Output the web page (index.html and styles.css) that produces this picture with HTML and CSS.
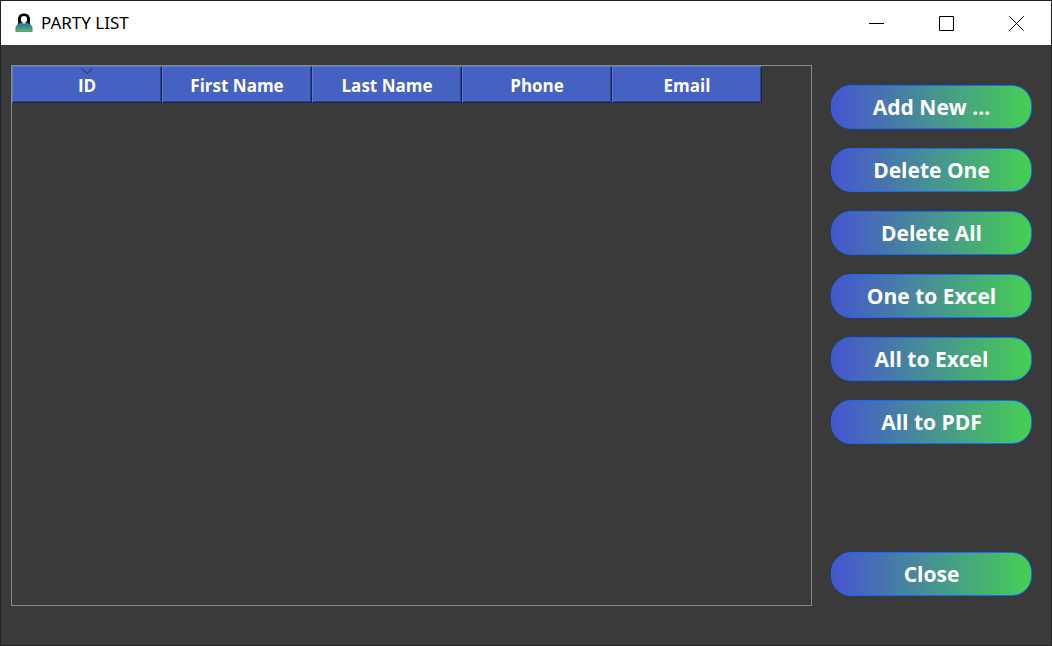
FILE: index.html
```html
<!DOCTYPE html>
<html lang="en">
<head>
<meta charset="utf-8">
<title>PARTY LIST</title>
<link rel="stylesheet" href="styles.css">
</head>
<body>
<div class="window">
  <header class="titlebar">
    <svg class="app-icon" viewBox="0 0 18 20" aria-hidden="true">
      <defs>
        <linearGradient id="body-fill" x1="0" y1="0" x2="0" y2="1">
          <stop offset="0" stop-color="#4158c0"/>
          <stop offset="0.5" stop-color="#3f9088"/>
          <stop offset="1" stop-color="#48c65c"/>
        </linearGradient>
      </defs>
      <path d="M3 13V6.500C3 2.500 5.400.5 9 .5S15 2.500 15 6.500V13Z" fill="#000"/>
      <path d="M.8 18.500V16C.8 12 4 9.500 9 9.500S17.200 12 17.200 16V18.500Z" fill="url(#body-fill)" stroke="#2f6a5c" stroke-width=".6"/>
      <path d="M7.500 8H10.500V10Q9 11 7.500 10Z" fill="#fff"/>
      <ellipse cx="9" cy="6.300" rx="3.100" ry="3.200" fill="#fff"/>
    </svg>
    <h1 class="title">PARTY LIST</h1>
    <div class="controls">
      <button class="control" type="button" aria-label="Minimize">
        <svg class="glyph" viewBox="0 0 15 15"><path d="M0 7.500H15"/></svg>
      </button>
      <button class="control" type="button" aria-label="Maximize">
        <svg class="glyph" viewBox="0 0 15 15"><path d="M.5.5H14.500V14.500H.5Z"/></svg>
      </button>
      <button class="control" type="button" aria-label="Close window">
        <svg class="glyph" viewBox="0 0 15 15"><path d="M.3.3L14.700 14.700M14.700.3L.3 14.700"/></svg>
      </button>
    </div>
  </header>
  <main class="content">
    <section class="table-frame">
      <table class="parties">
        <thead>
          <tr>
            <th scope="col" aria-sort="ascending">ID<svg class="sort" viewBox="0 0 12 6" aria-hidden="true"><path d="M.5.5L6 5.500L11.500.5"/></svg></th>
            <th scope="col">First Name</th>
            <th scope="col">Last Name</th>
            <th scope="col">Phone</th>
            <th scope="col">Email</th>
          </tr>
        </thead>
      </table>
    </section>
    <nav class="actions">
      <button class="action" type="button">Add New ...</button>
      <button class="action" type="button">Delete One</button>
      <button class="action" type="button">Delete All</button>
      <button class="action" type="button">One to Excel</button>
      <button class="action" type="button">All to Excel</button>
      <button class="action" type="button">All to PDF</button>
      <button class="action action-close" type="button">Close</button>
    </nav>
  </main>
</div>
</body>
</html>
```
FILE: styles.css
```css
* {
  box-sizing: border-box;
}

body {
  margin: 0;
  font-family: "Open Sans", "Noto Sans", sans-serif;
}

.window {
  display: flex;
  flex-direction: column;
  min-height: 100vh;
  border: 1px solid #222;
  background: #3a3a3a;
}

.titlebar {
  display: flex;
  align-items: center;
  height: 44px;
  padding-left: 14px;
  background: #fff;
}

.app-icon {
  width: 18px;
  height: 20px;
}

.title {
  flex: 1;
  margin: 0 0 0 8px;
  font-family: "Noto Sans", "Open Sans", sans-serif;
  font-size: 17px;
  font-weight: 400;
  line-height: 24px;
  color: #000;
}

.controls {
  display: flex;
}

.control {
  display: flex;
  align-items: center;
  justify-content: center;
  width: 70px;
  height: 44px;
  padding: 0;
  border: 0;
  background: none;
}

.glyph {
  width: 15px;
  height: 15px;
  fill: none;
  stroke: #000;
}

.content {
  flex: 1;
  display: flex;
  gap: 19px;
  padding: 20px 19px 39px 10px;
}

.table-frame {
  flex: 1;
  border: 1px solid #828790;
}

.parties {
  border-collapse: separate;
  border-spacing: 0;
  table-layout: fixed;
  width: 750px;
}

.parties th {
  position: relative;
  height: 37px;
  padding: 2px 0 0;
  border: solid;
  border-width: 1px;
  border-color: #5878e8 #182448 #182448 #5878e8;
  background: #4562c3;
  box-shadow: inset -1px -1px #2f4484;
  font-size: 17px;
  font-weight: 700;
  line-height: 24px;
  color: #fff;
}

.sort {
  position: absolute;
  top: 1px;
  left: 50%;
  width: 12px;
  height: 6px;
  margin-left: -6px;
  fill: none;
  stroke: #2c3038;
}

.actions {
  display: flex;
  flex-direction: column;
  gap: 19px;
  width: 201px;
  padding: 20px 0 10px;
}

.action {
  height: 44px;
  padding: 0;
  border: 1px solid #146cff;
  border-radius: 20px;
  background: linear-gradient(90deg, #4755d0, #46cf53);
  font-family: inherit;
  font-size: 21px;
  font-weight: 700;
  line-height: 28px;
  color: #fff;
}

.action-close {
  margin-top: auto;
}
```
